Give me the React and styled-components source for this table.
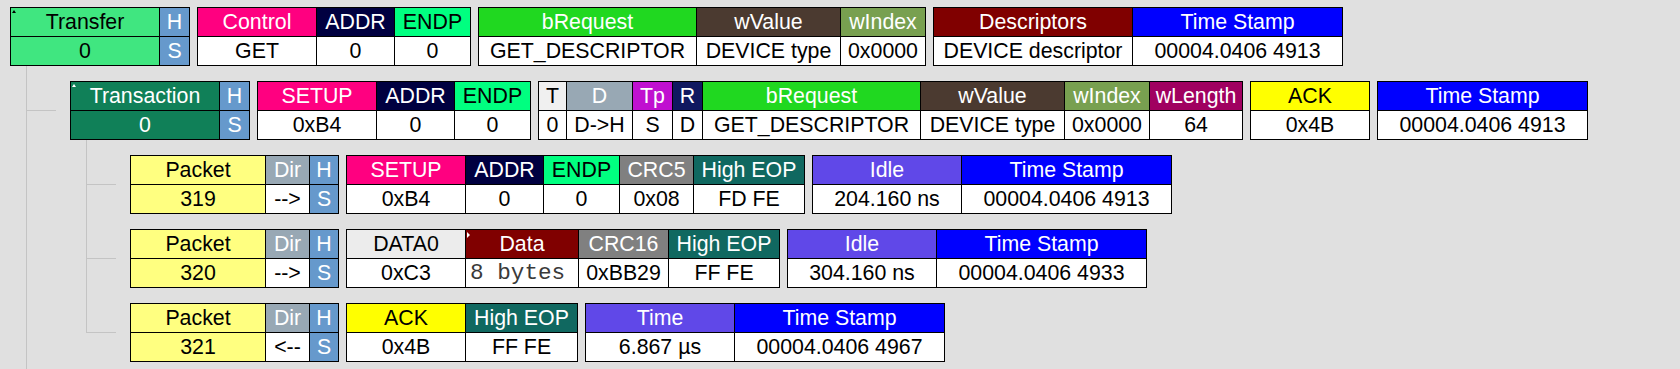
import React from 'react';
import styled, { createGlobalStyle, css } from 'styled-components';

const LINE = '#c4c4c4';

const C = {
  transfer: '#40e680',
  hs: '#6699cc',
  pink: '#ff0080',
  navy: '#000040',
  spring: '#00ff80',
  breq: '#20d820',
  brown: '#4b3a30',
  olive: '#78a050',
  maroon: '#800000',
  blue: '#0000ff',
  teal: '#108058',
  tgray: '#f0f0f0',
  dgray: '#98a8b4',
  purple: '#c010d0',
  rnavy: '#101860',
  wlen: '#a00060',
  yellow: '#ffff00',
  lyellow: '#ffff80',
  gray: '#808080',
  eop: '#106860',
  idle: '#6048e8',
  data0: '#ececec',
};

const GlobalStyle = createGlobalStyle`
  html, body { margin: 0; padding: 0; background: #e0e0e0; }
  body { font-family: "Liberation Sans", Arial, sans-serif; }
`;

const Page = styled.div`
  width: 1680px;
  height: 369px;
  overflow: hidden;
  box-sizing: border-box;
  padding: 7px 0 0 10px;
  background: #e0e0e0;
`;

const Row = styled.div`
  display: flex;
  gap: 7px;
  align-items: flex-start;
`;

const Group = styled.div`
  display: grid;
  grid-template-columns: ${(p) => p.$cols};
  grid-template-rows: 28px 28px;
  gap: 1px;
  padding: 1px;
  background: #000;
`;

const Cell = styled.div`
  position: relative;
  background: ${(p) => p.$bg};
  color: ${(p) => p.$fg};
  font-size: 16pt;
  line-height: 28px;
  text-align: center;
  white-space: nowrap;
  overflow: hidden;
`;

const MonoCell = styled(Cell)`
  font-family: "Liberation Mono", "Courier New", monospace;
  font-size: 17pt;
  color: #3a3a3a;
  text-align: left;
  padding-left: 4px;
`;

const Marker = styled.span`
  position: absolute;
  left: 1px;
  top: 2px;
  width: 0;
  height: 0;
  ${(p) =>
    p.$dir === 'right'
      ? css`
          border-top: 3px solid transparent;
          border-bottom: 3px solid transparent;
          border-left: 3px solid ${p.$color};
        `
      : css`
          border-left: 2px solid transparent;
          border-right: 2px solid transparent;
          border-bottom: 3px solid ${p.$color};
        `}
`;

const Children = styled.div`
  position: relative;
  margin-left: 16px;
  ${(p) =>
    p.$continues &&
    css`
      &::before {
        content: '';
        position: absolute;
        left: 0;
        top: 0;
        bottom: -400px;
        width: 1px;
        background: ${LINE};
      }
    `}
`;

const Item = styled.div`
  position: relative;
  padding: 15px 0 0 44px;
  &::before {
    content: '';
    position: absolute;
    left: 0;
    top: 44px;
    width: 30px;
    height: 1px;
    background: ${LINE};
  }
  &::after {
    content: '';
    position: absolute;
    left: 0;
    top: 0;
    width: 1px;
    background: ${LINE};
    ${(p) => (p.$last ? 'height: 45px;' : 'bottom: 0;')}
  }
`;

const col = (h, v, w, hbg, o = {}) => ({
  h,
  v,
  w,
  hbg,
  hfg: o.hfg || '#fff',
  vbg: o.vbg || '#fff',
  vfg: o.vfg || '#000',
  mark: o.mark,
  mono: o.mono,
});

const HS = (w) => col('H', 'S', w, C.hs, { vbg: C.hs, vfg: '#fff' });

const Box = ({ cols }) => (
  <Group $cols={cols.map((c) => `${c.w}px`).join(' ')}>
    {cols.map((c, i) => (
      <Cell key={`h${i}`} $bg={c.hbg} $fg={c.hfg}>
        {c.mark && <Marker $dir={c.mark.dir} $color={c.mark.color} />}
        {c.h}
      </Cell>
    ))}
    {cols.map((c, i) =>
      c.mono ? (
        <MonoCell key={`v${i}`} $bg={c.vbg}>
          {c.v}
        </MonoCell>
      ) : (
        <Cell key={`v${i}`} $bg={c.vbg} $fg={c.vfg}>
          {c.v}
        </Cell>
      )
    )}
  </Group>
);

const Line = ({ groups }) => (
  <Row>
    {groups.map((g, i) => (
      <Box key={i} cols={g} />
    ))}
  </Row>
);

const transferRow = [
  [
    col('Transfer', '0', 148, C.transfer, { hfg: '#000', vbg: C.transfer, mark: { dir: 'up', color: '#000' } }),
    HS(29),
  ],
  [
    col('Control', 'GET', 118, C.pink),
    col('ADDR', '0', 77, C.navy),
    col('ENDP', '0', 75, C.spring, { hfg: '#000' }),
  ],
  [
    col('bRequest', 'GET_DESCRIPTOR', 217, C.breq),
    col('wValue', 'DEVICE type', 143, C.brown),
    col('wIndex', '0x0000', 84, C.olive),
  ],
  [
    col('Descriptors', 'DEVICE descriptor', 198, C.maroon),
    col('Time Stamp', '00004.0406 4913', 209, C.blue),
  ],
];

const transactionRow = [
  [
    col('Transaction', '0', 148, C.teal, { vbg: C.teal, vfg: '#fff', mark: { dir: 'up', color: '#fff' } }),
    HS(29),
  ],
  [
    col('SETUP', '0xB4', 118, C.pink),
    col('ADDR', '0', 77, C.navy),
    col('ENDP', '0', 75, C.spring, { hfg: '#000' }),
  ],
  [
    col('T', '0', 27, C.tgray, { hfg: '#000' }),
    col('D', 'D->H', 65, C.dgray),
    col('Tp', 'S', 39, C.purple),
    col('R', 'D', 29, C.rnavy),
    col('bRequest', 'GET_DESCRIPTOR', 217, C.breq),
    col('wValue', 'DEVICE type', 143, C.brown),
    col('wIndex', '0x0000', 84, C.olive),
    col('wLength', '64', 92, C.wlen),
  ],
  [col('ACK', '0x4B', 118, C.yellow, { hfg: '#000' })],
  [col('Time Stamp', '00004.0406 4913', 209, C.blue)],
];

const packet = (n, dir) => [
  col('Packet', n, 134, C.lyellow, { hfg: '#000', vbg: C.lyellow }),
  col('Dir', dir, 43, C.dgray),
  HS(28),
];

const packetRows = [
  [
    packet('319', '-->'),
    [
      col('SETUP', '0xB4', 118, C.pink),
      col('ADDR', '0', 77, C.navy),
      col('ENDP', '0', 75, C.spring, { hfg: '#000' }),
      col('CRC5', '0x08', 73, C.gray),
      col('High EOP', 'FD FE', 110, C.eop),
    ],
    [
      col('Idle', '204.160 ns', 148, C.idle),
      col('Time Stamp', '00004.0406 4913', 209, C.blue),
    ],
  ],
  [
    packet('320', '-->'),
    [
      col('DATA0', '0xC3', 118, C.data0, { hfg: '#000' }),
      col('Data', '8 bytes', 112, C.maroon, { mono: true, mark: { dir: 'right', color: '#fff' } }),
      col('CRC16', '0xBB29', 89, C.gray),
      col('High EOP', 'FF FE', 110, C.eop),
    ],
    [
      col('Idle', '304.160 ns', 148, C.idle),
      col('Time Stamp', '00004.0406 4933', 209, C.blue),
    ],
  ],
  [
    packet('321', '<--'),
    [
      col('ACK', '0x4B', 118, C.yellow, { hfg: '#000' }),
      col('High EOP', 'FF FE', 111, C.eop),
    ],
    [
      col('Time', '6.867 µs', 148, C.idle),
      col('Time Stamp', '00004.0406 4967', 209, C.blue),
    ],
  ],
];

export default function App() {
  return (
    <>
      <GlobalStyle />
      <Page>
        <Line groups={transferRow} />
        <Children $continues>
          <Item $last>
            <Line groups={transactionRow} />
            <Children>
              {packetRows.map((r, i) => (
                <Item key={i} $last={i === packetRows.length - 1}>
                  <Line groups={r} />
                </Item>
              ))}
            </Children>
          </Item>
        </Children>
      </Page>
    </>
  );
}
